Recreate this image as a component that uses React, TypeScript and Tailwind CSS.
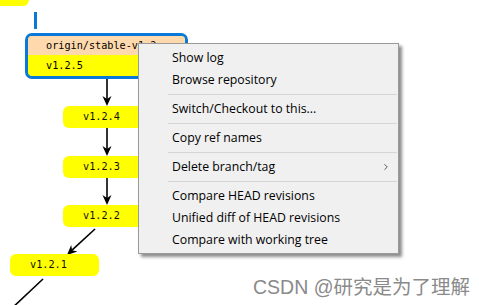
import { ChevronRight } from 'lucide-react';

type Entry = { label: string; sub?: boolean } | 'sep';

const menuEntries: Entry[] = [
    { label: 'Show log' },
    { label: 'Browse repository' },
    'sep',
    { label: 'Switch/Checkout to this...' },
    'sep',
    { label: 'Copy ref names' },
    'sep',
    { label: 'Delete branch/tag', sub: true },
    'sep',
    { label: 'Compare HEAD revisions' },
    { label: 'Unified diff of HEAD revisions' },
    { label: 'Compare with working tree' }
];

const tags = [
    { name: 'v1.2.4', left: 'left-[63px]', top: 'top-[106px]' },
    { name: 'v1.2.3', left: 'left-[63px]', top: 'top-[156px]' },
    { name: 'v1.2.2', left: 'left-[63px]', top: 'top-[205px]' },
    { name: 'v1.2.1', left: 'left-[10px]', top: 'top-[254px]' }
];

const mono = "font-['DejaVu_Sans_Mono',monospace] text-[10.2px]";

const Arrow = ({ x, y }: { x: number; y: number }) => (
    <polygon
        points={`${x},${y} ${x - 4.5},${y - 10} ${x},${y - 7} ${x + 4.5},${y - 10}`}
        fill="#000"
    />
);

const App = () => {
    return (
        <div className="relative w-[479px] h-[305px] bg-white overflow-hidden">
            {/* edges */}
            <svg className="absolute inset-0" width="479" height="305">
                <rect x="34" y="12" width="3" height="17" fill="#0a78d8" />
                <line x1="107" y1="79" x2="107" y2="100" stroke="#000" strokeWidth="1.6" />
                <Arrow x={107} y={106} />
                <line x1="107" y1="128" x2="107" y2="150" stroke="#000" strokeWidth="1.6" />
                <Arrow x={107} y={156} />
                <line x1="107" y1="178" x2="107" y2="199" stroke="#000" strokeWidth="1.6" />
                <Arrow x={107} y={205} />
                <line x1="95" y1="229" x2="72" y2="250.2" stroke="#000" strokeWidth="1.6" />
                <polygon points="67,255 77.4,251.5 72.1,250.2 71.2,244.9" fill="#000" />
                <line x1="43" y1="279" x2="10" y2="310" stroke="#000" strokeWidth="1.6" />
            </svg>

            {/* graph nodes */}
            <div className="absolute left-[-60px] top-[-16px] w-[89px] h-[22px] rounded-[6px] bg-[#ffff00]" />

            <div className="absolute left-[25px] top-[33px] w-[163px] h-[46px] rounded-[7px] border-[3px] border-[#0a78d8] bg-[#ffff00] overflow-hidden">
                <div className={`h-[19px] bg-[#fed9ad] pl-[18px] flex items-center text-black ${mono}`}>
                    origin/stable-v1.2.x
                </div>
                <div className={`h-[21px] pl-[18px] flex items-center text-black ${mono}`}>
                    v1.2.5
                </div>
            </div>

            {tags.map((t) => (
                <div
                    key={t.name}
                    className={`absolute ${t.left} ${t.top} w-[89px] h-[22px] rounded-[6px] bg-[#ffff00] pl-[20px] flex items-center text-[#111] ${mono}`}
                >
                    {t.name}
                </div>
            ))}

            {/* context menu */}
            <div className="absolute left-[138px] top-[43px] w-[261px] h-[211px] border border-[#9a9a9a] bg-[#f0f0f0] pt-[3px] pb-[2px] shadow-[3px_3px_3px_rgba(0,0,0,0.45)] font-['Open_Sans',sans-serif] text-[12.3px] text-black">
                {menuEntries.map((e, i) =>
                    e === 'sep' ? (
                        <div key={i} className="h-[7px] flex items-center ml-[29px] mr-[1px]">
                            <div className="h-px w-full bg-[#d5d5d5]" />
                        </div>
                    ) : (
                        <div key={i} className="h-[22px] flex items-center pl-[33px] pr-[7px]">
                            <span className="flex-1">{e.label}</span>
                            {e.sub && <ChevronRight size={10} strokeWidth={1.5} />}
                        </div>
                    )
                )}
            </div>

            {/* watermark */}
            <div className="absolute left-[253px] top-[275px] text-[19.5px] leading-[24px] text-[#8a8a8a] font-['Liberation_Sans','Noto_Sans_CJK_SC',sans-serif] [text-shadow:0_0_2px_#fff]">
                CSDN @研究是为了理解
            </div>
        </div>
    );
};

export default App;
